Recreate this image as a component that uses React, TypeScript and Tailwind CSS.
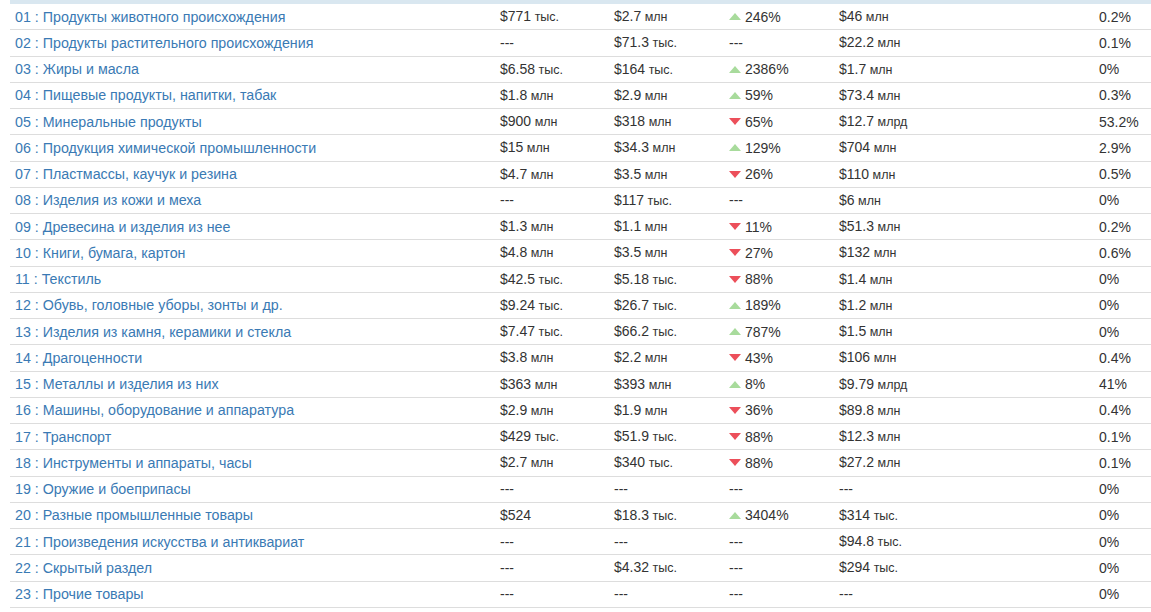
import React from 'react';

type Row = {
  name: string;
  a: [string, string] | null;
  b: [string, string] | null;
  trend: 'up' | 'down' | null;
  pct: string;
  c: [string, string] | null;
  share: string;
};

const ROWS: Row[] = [
  { name: '01 : Продукты животного происхождения', a: ['$771', 'тыс.'], b: ['$2.7', 'млн'], trend: 'up', pct: '246%', c: ['$46', 'млн'], share: '0.2%' },
  { name: '02 : Продукты растительного происхождения', a: null, b: ['$71.3', 'тыс.'], trend: null, pct: '', c: ['$22.2', 'млн'], share: '0.1%' },
  { name: '03 : Жиры и масла', a: ['$6.58', 'тыс.'], b: ['$164', 'тыс.'], trend: 'up', pct: '2386%', c: ['$1.7', 'млн'], share: '0%' },
  { name: '04 : Пищевые продукты, напитки, табак', a: ['$1.8', 'млн'], b: ['$2.9', 'млн'], trend: 'up', pct: '59%', c: ['$73.4', 'млн'], share: '0.3%' },
  { name: '05 : Минеральные продукты', a: ['$900', 'млн'], b: ['$318', 'млн'], trend: 'down', pct: '65%', c: ['$12.7', 'млрд'], share: '53.2%' },
  { name: '06 : Продукция химической промышленности', a: ['$15', 'млн'], b: ['$34.3', 'млн'], trend: 'up', pct: '129%', c: ['$704', 'млн'], share: '2.9%' },
  { name: '07 : Пластмассы, каучук и резина', a: ['$4.7', 'млн'], b: ['$3.5', 'млн'], trend: 'down', pct: '26%', c: ['$110', 'млн'], share: '0.5%' },
  { name: '08 : Изделия из кожи и меха', a: null, b: ['$117', 'тыс.'], trend: null, pct: '', c: ['$6', 'млн'], share: '0%' },
  { name: '09 : Древесина и изделия из нее', a: ['$1.3', 'млн'], b: ['$1.1', 'млн'], trend: 'down', pct: '11%', c: ['$51.3', 'млн'], share: '0.2%' },
  { name: '10 : Книги, бумага, картон', a: ['$4.8', 'млн'], b: ['$3.5', 'млн'], trend: 'down', pct: '27%', c: ['$132', 'млн'], share: '0.6%' },
  { name: '11 : Текстиль', a: ['$42.5', 'тыс.'], b: ['$5.18', 'тыс.'], trend: 'down', pct: '88%', c: ['$1.4', 'млн'], share: '0%' },
  { name: '12 : Обувь, головные уборы, зонты и др.', a: ['$9.24', 'тыс.'], b: ['$26.7', 'тыс.'], trend: 'up', pct: '189%', c: ['$1.2', 'млн'], share: '0%' },
  { name: '13 : Изделия из камня, керамики и стекла', a: ['$7.47', 'тыс.'], b: ['$66.2', 'тыс.'], trend: 'up', pct: '787%', c: ['$1.5', 'млн'], share: '0%' },
  { name: '14 : Драгоценности', a: ['$3.8', 'млн'], b: ['$2.2', 'млн'], trend: 'down', pct: '43%', c: ['$106', 'млн'], share: '0.4%' },
  { name: '15 : Металлы и изделия из них', a: ['$363', 'млн'], b: ['$393', 'млн'], trend: 'up', pct: '8%', c: ['$9.79', 'млрд'], share: '41%' },
  { name: '16 : Машины, оборудование и аппаратура', a: ['$2.9', 'млн'], b: ['$1.9', 'млн'], trend: 'down', pct: '36%', c: ['$89.8', 'млн'], share: '0.4%' },
  { name: '17 : Транспорт', a: ['$429', 'тыс.'], b: ['$51.9', 'тыс.'], trend: 'down', pct: '88%', c: ['$12.3', 'млн'], share: '0.1%' },
  { name: '18 : Инструменты и аппараты, часы', a: ['$2.7', 'млн'], b: ['$340', 'тыс.'], trend: 'down', pct: '88%', c: ['$27.2', 'млн'], share: '0.1%' },
  { name: '19 : Оружие и боеприпасы', a: null, b: null, trend: null, pct: '', c: null, share: '0%' },
  { name: '20 : Разные промышленные товары', a: ['$524', ''], b: ['$18.3', 'тыс.'], trend: 'up', pct: '3404%', c: ['$314', 'тыс.'], share: '0%' },
  { name: '21 : Произведения искусства и антиквариат', a: null, b: null, trend: null, pct: '', c: ['$94.8', 'тыс.'], share: '0%' },
  { name: '22 : Скрытый раздел', a: null, b: ['$4.32', 'тыс.'], trend: null, pct: '', c: ['$294', 'тыс.'], share: '0%' },
  { name: '23 : Прочие товары', a: null, b: null, trend: null, pct: '', c: null, share: '0%' },
];

const Money = ({ v }: { v: [string, string] | null }) =>
  v ? (
    <span>
      {v[0]}
      {v[1] && <span className="text-[12.5px]"> {v[1]}</span>}
    </span>
  ) : (
    <span>---</span>
  );

const Trend = ({ t, pct }: { t: Row['trend']; pct: string }) => {
  if (!t) return <span>---</span>;
  return (
    <span className="flex items-center">
      {t === 'up' ? (
        <span className="mr-[4px] h-0 w-0 border-x-[6.5px] border-b-[7px] border-x-transparent border-b-[#a8db9c]" />
      ) : (
        <span className="mr-[4px] h-0 w-0 border-x-[6.5px] border-t-[7px] border-x-transparent border-t-[#ec4f5a]" />
      )}
      {pct}
    </span>
  );
};

export default function App() {
  return (
    <div
      className="w-[1151px] h-[612px] bg-white pl-[10px] overflow-hidden text-[14px] text-[#333]"
      style={{ fontFamily: '"Liberation Sans", Arial, sans-serif' }}
    >
      <div className="h-[4px] bg-[#d9e7f0]" />
      {ROWS.map((r) => (
        <div
          key={r.name}
          className="grid grid-cols-[485px_114px_115px_110px_260px_1fr] h-[26.26px] items-center border-b border-[#dddddd] leading-[20px]"
        >
          <span className="pl-[5px] text-[14.25px] text-[#3a7ab4] whitespace-nowrap">{r.name}</span>
          <span className="pl-[5px]"><Money v={r.a} /></span>
          <span className="pl-[5px]"><Money v={r.b} /></span>
          <span className="pl-[5px]"><Trend t={r.trend} pct={r.pct} /></span>
          <span className="pl-[5px]"><Money v={r.c} /></span>
          <span className="pl-[5px]">{r.share}</span>
        </div>
      ))}
    </div>
  );
}
